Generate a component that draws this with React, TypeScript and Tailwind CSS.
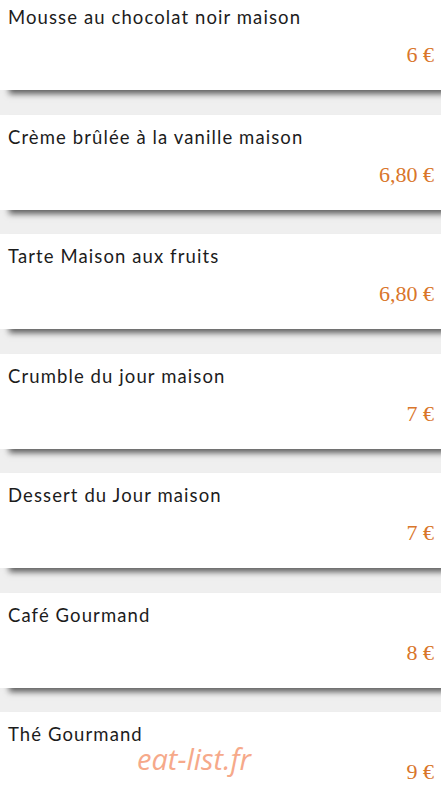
import React from "react";

const items = [
  { name: "Mousse au chocolat noir maison", price: "6 €" },
  { name: "Crème brûlée à la vanille maison", price: "6,80 €" },
  { name: "Tarte Maison aux fruits", price: "6,80 €" },
  { name: "Crumble du jour maison", price: "7 €" },
  { name: "Dessert du Jour maison", price: "7 €" },
  { name: "Café Gourmand", price: "8 €" },
  { name: "Thé Gourmand", price: "9 €" },
];

export default function App() {
  return (
    <div className="relative w-[441px] h-[804px] overflow-hidden bg-[#efefef]">
      <div className="-mt-[5px] flex flex-col gap-[24.5px]">
        {items.map((it) => (
          <div
            key={it.name}
            className="h-[95px] bg-white pl-[8px] pr-[7px] pt-[10px] shadow-[7px_6px_6px_-2px_rgba(0,0,0,0.6)]"
          >
            <div className="text-[18.5px] leading-[24px] text-[#1c1c1c] font-['Lato',sans-serif] tracking-[1.1px]">
              {it.name}
            </div>
            <div className="mt-[13px] text-right text-[22px] leading-[26px] text-[#d9762b] font-['Liberation_Serif',serif]">
              {it.price}
            </div>
          </div>
        ))}
      </div>
      <div className="absolute left-[137px] top-[741px] text-[29px] leading-[36px] italic text-[#f6a98a] font-['Open_Sans',sans-serif]">
        eat-list.fr
      </div>
    </div>
  );
}
